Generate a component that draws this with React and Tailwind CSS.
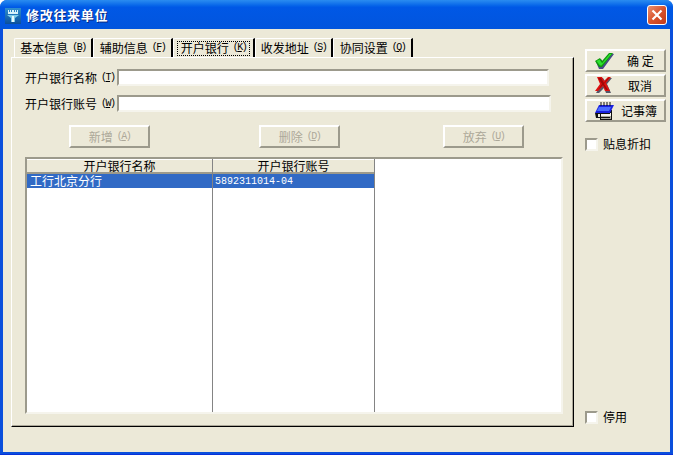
const cjk = "font-['Noto_Sans_CJK_SC',sans-serif] text-[12px] leading-[14px] text-black";

const tabs = [
  { label: "基本信息", key: "B", width: "w-[79px]" },
  { label: "辅助信息", key: "F", width: "w-[80px]" },
  { label: "开户银行", key: "K", width: "w-[82px]", active: true },
  { label: "收发地址", key: "S", width: "w-[78px]" },
  { label: "协同设置", key: "Q", width: "w-[80px]" },
];

function Mnemonic({ letter }) {
  return (
    <span className="ml-[4px] font-['Liberation_Mono',monospace] text-[10px] tracking-[-1.5px]">
      (<u>{letter}</u>)
    </span>
  );
}

function Tab({ tab }) {
  return (
    <div className={`${tab.width} h-[19px] flex items-center justify-center border-t border-l border-white border-r-2 border-r-black rounded-tl-[2px] ${cjk}`}>
      <div className={`flex items-center h-[15px] px-[3px] ${tab.active ? "border border-dotted border-black" : ""}`}>
        {tab.label}
        <Mnemonic letter={tab.key} />
      </div>
    </div>
  );
}

function TextRow({ label, letter, inputWidth, className }) {
  return (
    <div className={`flex items-center pl-[13px] ${className}`}>
      <div className={`w-[92px] flex items-center ${cjk}`}>
        {label}
        <Mnemonic letter={letter} />
      </div>
      <div className={`${inputWidth} h-[17px] bg-white border-2 border-t-[#9c9a8c] border-l-[#9c9a8c] border-r-[#f5f4ec] border-b-[#f5f4ec]`} />
    </div>
  );
}

function DisabledButton({ label, letter, className }) {
  return (
    <div className={`w-[81px] h-[23px] flex items-center justify-center border-2 border-t-white border-l-white border-r-[#9c9a8c] border-b-[#9c9a8c] text-[12px] text-[#aca899] font-['Noto_Sans_CJK_SC',sans-serif] ${className}`}>
      {label}
      <Mnemonic letter={letter} />
    </div>
  );
}

function SideButton({ icon, label, textClass }) {
  return (
    <div className="w-[81px] h-[23px] flex items-center border-2 border-t-white border-l-white border-r-[#9c9a8c] border-b-[#9c9a8c] mb-[2px]">
      <div className="w-[31px] flex justify-center pl-[3px]">{icon}</div>
      <div className={`${cjk} ${textClass}`}>{label}</div>
    </div>
  );
}

function Checkbox({ label, className }) {
  return (
    <div className={`flex items-center ${className}`}>
      <div className="w-[13px] h-[13px] bg-white border-2 border-t-[#9c9a8c] border-l-[#9c9a8c] border-r-[#f5f4ec] border-b-[#f5f4ec]" />
      <div className={`ml-[5px] ${cjk}`}>{label}</div>
    </div>
  );
}

function TitleIcon() {
  return (
    <svg width="16" height="16" viewBox="0 0 16 16" className="mt-[2px]">
      <defs>
        <linearGradient id="titleBg" x1="0" y1="0" x2="0" y2="1">
          <stop offset="0" stopColor="#2f8fd0" />
          <stop offset="1" stopColor="#0b4f9c" />
        </linearGradient>
      </defs>
      <rect x="0" y="0" width="16" height="16" fill="url(#titleBg)" />
      <path d="M3 2h1v2h1V2h1v2h1V2h2v2h1V2h1v2h1V2h1v4H3z" fill="#d5f0fa" />
      <path d="M2 7h12l-4 3v4H6v-4z" fill="#7ecbe8" />
      <rect x="7" y="8" width="2" height="6" fill="#eaf8fd" />
    </svg>
  );
}

function CheckIcon() {
  return (
    <svg width="19" height="16" viewBox="0 0 19 16">
      <path d="M1 9l5-3 2 3 7-9 4 1L8 16H4z" fill="#4a4a86" />
      <path d="M0 8l5-3 2 3 7-8h4L7 14H4z" fill="#0f9a0f" />
      <path d="M1.5 8l3-1.5 2.6 3.8L14.6 1h2L6.5 12.4H5z" fill="#2ee02e" />
    </svg>
  );
}

function CrossIcon() {
  return (
    <svg width="18" height="17" viewBox="0 0 18 17">
      <path d="M4 1h4l2 3 4-3h3l-5 6 4 9h-5l-2-5-5 5H1l5-8z" fill="#555566" />
      <path d="M2 0h5l2 4 4-4h3l-5 6 4 8h-5L8 9l-5 5H0l5-7z" fill="#e01010" />
      <path d="M3 1h3l3 5 4-5h1L9 7l4 6h-2L8 8l-5 5 4-6z" fill="#a00808" />
    </svg>
  );
}

function NotepadIcon() {
  return (
    <svg width="19" height="18" viewBox="0 0 19 18">
      <path d="M5 8h12v10H5z" fill="#111" />
      <path d="M6 11h10v6H6z" fill="#f4f4ee" />
      <path d="M6 14h10v3H6z" fill="#a8a89c" />
      <path d="M4 3h15l-4 8H0z" fill="#1a22e0" />
      <path d="M4 5h12l-2 4H2z" fill="#4a6cff" />
      <path d="M0 11h15v1H3v3h12v1H1z" fill="#111" />
      <path d="M6 0v4M9 0v4M12 0v4M15 0v4" stroke="#111" strokeWidth="1" />
    </svg>
  );
}

function ListColumn({ width, header, cell, mono }) {
  return (
    <div className={`${width} flex flex-col shrink-0 border-r border-[#848484]`}>
      <div className={`h-[15px] flex items-center justify-center bg-[#ece9d8] border-t border-t-white border-b-2 border-b-[#9c9a8c] ${cjk}`}>
        {header}
      </div>
      <div className={`h-[14px] flex items-center bg-[#316ac5] text-white ${mono ? "pl-[2px] font-['Liberation_Mono',monospace] text-[10px]" : "pl-[3px] font-['Noto_Sans_CJK_SC',sans-serif] text-[12px]"}`}>
        {cell}
      </div>
    </div>
  );
}

export default function App() {
  return (
    <div className="w-[673px] h-[455px] flex flex-col bg-[#0a4fdc] border-b border-b-[#0831d9] rounded-t-[7px] overflow-hidden">
      {/* title bar */}
      <div className="h-[29px] shrink-0 flex items-center pl-[5px] pr-[6px] bg-gradient-to-b from-[#2a8cf0] via-[#0058e6] via-25% to-[#0255dd]">
        <TitleIcon />
        <div className="ml-[5px] font-['Noto_Sans_CJK_SC',sans-serif] text-[13px] font-bold tracking-[0.7px] text-white [text-shadow:1px_1px_0_#0a2a80]">
          修改往来单位
        </div>
        <div className="ml-auto w-[20px] h-[20px] rounded-[3px] border border-white bg-gradient-to-br from-[#e8906f] via-[#d9532c] to-[#c23a18] flex items-center justify-center">
          <svg width="12" height="12" viewBox="0 0 12 12">
            <path d="M1.5 1.5l9 9M10.5 1.5l-9 9" stroke="#fff" strokeWidth="2.2" />
          </svg>
        </div>
      </div>

      {/* client area */}
      <div className="flex-1 mx-[3px] mb-[2px] bg-[#ece9d8] flex pl-[8px] pt-[9px]">
        <div className="w-[563px] shrink-0">
          <div className="flex h-[19px] pl-[3px]">
            {tabs.map((t) => (
              <Tab key={t.key} tab={t} />
            ))}
          </div>
          <div className="h-[370px] border-t border-l border-white border-r border-b border-r-black border-b-black">
            <div className="h-full border-r border-b border-[#aca899]">
              <TextRow label="开户银行名称" letter="T" inputWidth="w-[432px]" className="pt-[11px]" />
              <TextRow label="开户银行账号" letter="W" inputWidth="w-[434px]" className="mt-[9px]" />
              <div className="flex mt-[13px] ml-[57px]">
                <DisabledButton label="新增" letter="A" />
                <DisabledButton label="删除" letter="D" className="ml-[109px]" />
                <DisabledButton label="放弃" letter="U" className="ml-[103px]" />
              </div>
              <div className="ml-[13px] mt-[9px] w-[538px] h-[257px] bg-white flex border-2 border-t-[#9c9a8c] border-l-[#9c9a8c] border-r-[#f5f4ec] border-b-[#f5f4ec]">
                <ListColumn width="w-[186px]" header="开户银行名称" cell="工行北京分行" />
                <ListColumn width="w-[162px]" header="开户银行账号" cell="5892311014-04" mono />
              </div>
            </div>
          </div>
        </div>

        {/* right column */}
        <div className="ml-[11px] w-[81px] flex flex-col pt-[11px]">
          <SideButton icon={<CheckIcon />} label="确 定" textClass="ml-[9px]" />
          <SideButton icon={<CrossIcon />} label="取消" textClass="ml-[10px]" />
          <SideButton icon={<NotepadIcon />} label="记事簿" textClass="ml-[3px]" />
          <Checkbox label="贴息折扣" className="mt-[13px]" />
          <Checkbox label="停用" className="mt-[259px]" />
        </div>
      </div>
    </div>
  );
}
